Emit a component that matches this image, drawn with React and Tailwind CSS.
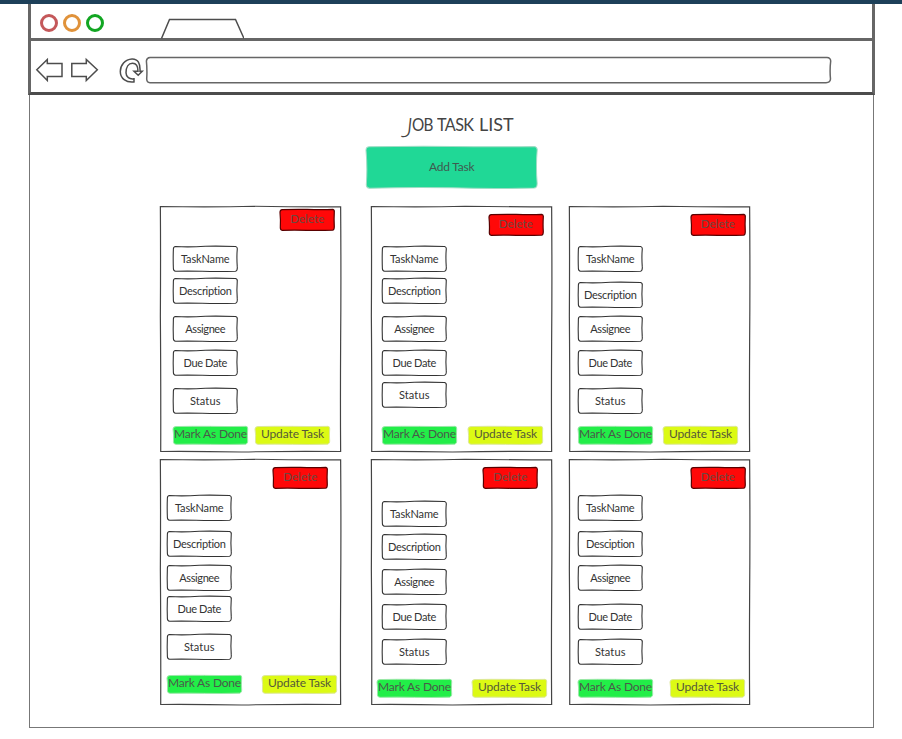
const SHAPES = {
  // Slightly uneven outlines, stretched to whatever box they sit in.
  field: 'M4 2 Q25 5 50 1 Q75 0 97 2 Q100.3 4 99.6 14 Q98.6 45 99.6 80 Q100.3 97 97 99 Q70 101 45 99 Q20 98 4 99 Q0.6 98 0.6 88 Q0 50 0.6 12 Q0.6 3 4 2 Z',
  button: 'M4 3 Q25 1 50 2 Q76 4 97 2 Q100.3 4 99.6 16 Q98.8 48 99.6 82 Q99.6 96 97 98 Q72 101 50 99 Q26 97 4 99 Q0.6 98 0.6 86 Q1.4 50 0 16 Q0 4 4 3 Z',
  wide: 'M2 2 Q25 0 50 1 Q76 3 98 1 Q100 2 99.8 10 Q99 48 99.8 88 Q99.8 98 98 99 Q72 101 50 98.5 Q26 97 2 99.5 Q0 98 0.2 90 Q0.9 50 0 10 Q0 2 2 2 Z',
  card: 'M0.2 0.2 Q30 0.5 52 0.1 Q78 0.4 99.8 0.3 Q100.1 30 99.8 55 Q99.6 80 99.8 99.8 Q70 99.6 45 100 Q20 99.7 0.4 99.8 Q0.5 70 0.2 45 Q0.4 20 0.2 0.2 Z',
};

function Sketch({ shape, className }) {
  return (
    <svg
      className={`absolute inset-0 h-full w-full overflow-visible ${className}`}
      viewBox="0 0 100 100"
      preserveAspectRatio="none"
      aria-hidden="true"
    >
      <path d={SHAPES[shape]} vectorEffect="non-scaling-stroke" />
    </svg>
  );
}

function Box({ shape = 'button', paint, className, text, children }) {
  return (
    <div className={`relative flex shrink-0 items-center justify-center ${className}`}>
      <Sketch shape={shape} className={paint} />
      <span className={`relative whitespace-nowrap ${text}`}>{children}</span>
    </div>
  );
}

const FIELD_TEXT = {
  TaskName: 'tracking-[-0.15px]',
  Description: 'tracking-[-0.3px]',
  Desciption: 'tracking-[-0.35px]',
  Assignee: 'tracking-[-0.4px]',
  'Due Date': 'tracking-[-0.35px]',
  Status: 'tracking-[0.1px]',
};

const CARDS = [
  {
    remove: 'mt-[3px] ml-[120px]',
    column: 'ml-[13px] mt-[16px]',
    names: ['TaskName', 'Description', 'Assignee', 'Due Date', 'Status'],
    gaps: ['', 'mt-[6px]', 'mt-[12.5px]', 'mt-[9px]', 'mt-[12.5px]'],
    actions: 'ml-[13px] mt-[12px] gap-[7px]',
  },
  {
    remove: 'mt-[8px] ml-[117.5px]',
    column: 'ml-[11px] mt-[11px]',
    names: ['TaskName', 'Description', 'Assignee', 'Due Date', 'Status'],
    gaps: ['', 'mt-[6px]', 'mt-[12.5px]', 'mt-[9px]', 'mt-[6.5px]'],
    actions: 'ml-[11px] mt-[18px] gap-[11px]',
  },
  {
    remove: 'mt-[8px] ml-[121.5px]',
    column: 'ml-[9px] mt-[11px]',
    names: ['TaskName', 'Description', 'Assignee', 'Due Date', 'Status'],
    gaps: ['', 'mt-[10px]', 'mt-[8.5px]', 'mt-[9px]', 'mt-[12.5px]'],
    actions: 'ml-[9px] mt-[12px] gap-[10px]',
  },
  {
    remove: 'mt-[8px] ml-[113px]',
    column: 'ml-[7px] mt-[6.5px]',
    names: ['TaskName', 'Description', 'Assignee', 'Due Date', 'Status'],
    gaps: ['', 'mt-[10px]', 'mt-[8.5px]', 'mt-[6px]', 'mt-[12.5px]'],
    actions: 'ml-[7px] mt-[15px] gap-[20px]',
  },
  {
    remove: 'mt-[8px] ml-[112px]',
    column: 'ml-[11px] mt-[12px]',
    names: ['TaskName', 'Description', 'Assignee', 'Due Date', 'Status'],
    gaps: ['', 'mt-[7.5px]', 'mt-[9.5px]', 'mt-[10px]', 'mt-[9px]'],
    actions: 'ml-[6px] mt-[14.5px] gap-[20px]',
  },
  {
    remove: 'mt-[8px] ml-[121.5px]',
    column: 'ml-[9px] mt-[6.5px]',
    names: ['TaskName', 'Desciption', 'Assignee', 'Due Date', 'Status'],
    gaps: ['', 'mt-[10px]', 'mt-[8.5px]', 'mt-[14px]', 'mt-[9px]'],
    actions: 'ml-[9px] mt-[14.5px] gap-[17px]',
  },
];

function TaskCard({ card }) {
  return (
    <article className="relative flex h-full w-[181px] shrink-0 flex-col">
      <Sketch shape="card" className="fill-white stroke-[#444] stroke-[1.2]" />
      <Box
        paint="fill-[#ff0808] stroke-[#5a0000] stroke-[1.2]"
        className={`h-[21.5px] w-[54.5px] ${card.remove}`}
        text="text-[11.5px] tracking-[0.1px] text-[#6a4a42] -top-px"
      >
        Delete
      </Box>
      <div className={`flex flex-col ${card.column}`}>
        {card.names.map((name, i) => (
          <Box
            key={name}
            shape="field"
            paint="fill-white stroke-[#333] stroke-[1.1]"
            className={`h-[25.5px] w-[64.5px] ${card.gaps[i]}`}
            text={`text-[11px] text-[#333] ${FIELD_TEXT[name]}`}
          >
            {name}
          </Box>
        ))}
      </div>
      <div className={`flex ${card.actions}`}>
        <Box
          paint="fill-[#22ee48] stroke-[#9be8a8] stroke-1"
          className="h-[18.5px] w-[75px]"
          text="text-[12px] tracking-[-0.2px] text-[#4a5a4a] -top-px"
        >
          Mark As Done
        </Box>
        <Box
          paint="fill-[#dcfa14] stroke-[#dde89a] stroke-1"
          className="h-[18.5px] w-[75px]"
          text="text-[12px] tracking-[-0.1px] text-[#55583a] -top-px"
        >
          Update Task
        </Box>
      </div>
    </article>
  );
}

function BrowserChrome() {
  return (
    <header className="w-[847px]">
      <div className="flex h-[34px] items-start border-x-[3px] border-[#666]">
        <div className="ml-[9px] mt-[10px] flex gap-[5px]">
          <i className="h-[18px] w-[18px] rounded-full border-[3px] border-[#c4585a]" />
          <i className="h-[18px] w-[18px] rounded-full border-[3px] border-[#e0923a]" />
          <i className="h-[18px] w-[18px] rounded-full border-[3px] border-[#12a622]" />
        </div>
        <svg className="ml-[56px] mt-[14px] h-[21px] w-[84px] shrink-0" viewBox="0 0 84 21" fill="none" stroke="#4d4d4d" strokeWidth="1.5">
          <path d="M1.5 20.5 L9.5 1.4 L75.5 1.4 L84 20.5" />
        </svg>
      </div>
      <div className="flex h-[57px] items-start border-x-[3px] border-y-[3px] border-[#666] border-b-[#4c4c4c]">
        <svg className="mt-[16px] ml-[4px] h-[26px] w-[112px] shrink-0" viewBox="0 0 112 26" fill="none" stroke="#4d4d4d" strokeWidth="1.5">
          <path d="M1.8 12.7 L12.3 2.5 V6.5 H27 V19.5 H12.3 V23.5 Z" />
          <path d="M36.8 6.5 H51.3 V2.5 L62.3 12.7 L51.3 23.5 V19.5 H36.8 Z" />
          <path d="M99 21.8 C94.5 22.5 91 20 91 15.8 C91 10 93.5 6.3 97.5 6.3 C101 6.3 103 9.5 103 14.3 H99 L103.2 18.2 L107.2 14.3 H105 C105.5 6.5 103 1.7 97 1.9 C90 2.3 85.3 8 85.3 14.5 C85.3 21.5 91 25.8 99 24.9 Z" />
        </svg>
        <div className="-ml-[1.5px] mt-[16px] h-[26px] w-[685px]">
          <svg className="h-full w-full overflow-visible" viewBox="0 0 685 26" fill="none" stroke="#666" strokeWidth="1.5">
            <path d="M4 .6 H681 Q684.5 .8 684.7 4 Q683.6 13 684.5 22 Q684.3 25.5 680 25.7 H4 Q.8 25.5 .7 22 Q1.3 13 .4 4 Q.8 .8 4 .6 Z" />
          </svg>
        </div>
      </div>
    </header>
  );
}

export default function App() {
  return (
    <div className="flex h-[739px] w-[902px] flex-col overflow-hidden bg-white font-['Lato','Noto_Sans',sans-serif] leading-none">
      <div className="h-[4px] shrink-0 bg-[#1d4059]" />
      <div className="ml-[28px] flex w-[847px] flex-col">
        <BrowserChrome />
        <main className="ml-px flex h-[633px] w-[845px] flex-col border-x border-b border-[#777]">
          <h1 className="ml-[373px] mt-[20px] flex h-[25px] items-start whitespace-pre text-[18px] leading-[19px] text-[#444]">
            <span className="w-[9px] origin-top -skew-x-6 text-[27px] font-light leading-[24px]">J</span>
            <span className="w-[25px] origin-left scale-x-90 text-[17px] tracking-[-0.8px]">OB</span>
            <span className="w-[42px] origin-left scale-x-90 tracking-[-0.7px]">TASK</span>
            <span className="w-[36px] origin-left">LIST</span>
          </h1>
          <Box
            shape="wide"
            paint="fill-[#20d896] stroke-[#9fdcc4] stroke-1"
            className="ml-[336px] mt-[6px] h-[42.5px] w-[171.5px]"
            text="text-[12px] tracking-[-0.2px] text-[#3f5a50]"
          >
            Add Task
          </Box>
          <section className="ml-[130px] mt-[17px] flex flex-col gap-[7.5px]">
            <div className="flex h-[246px]">
              <TaskCard card={CARDS[0]} />
              <div className="w-[30px]" />
              <TaskCard card={CARDS[1]} />
              <div className="w-[17px]" />
              <TaskCard card={CARDS[2]} />
            </div>
            <div className="flex h-[246px]">
              <TaskCard card={CARDS[3]} />
              <div className="w-[30px]" />
              <TaskCard card={CARDS[4]} />
              <div className="w-[17px]" />
              <TaskCard card={CARDS[5]} />
            </div>
          </section>
        </main>
      </div>
    </div>
  );
}
